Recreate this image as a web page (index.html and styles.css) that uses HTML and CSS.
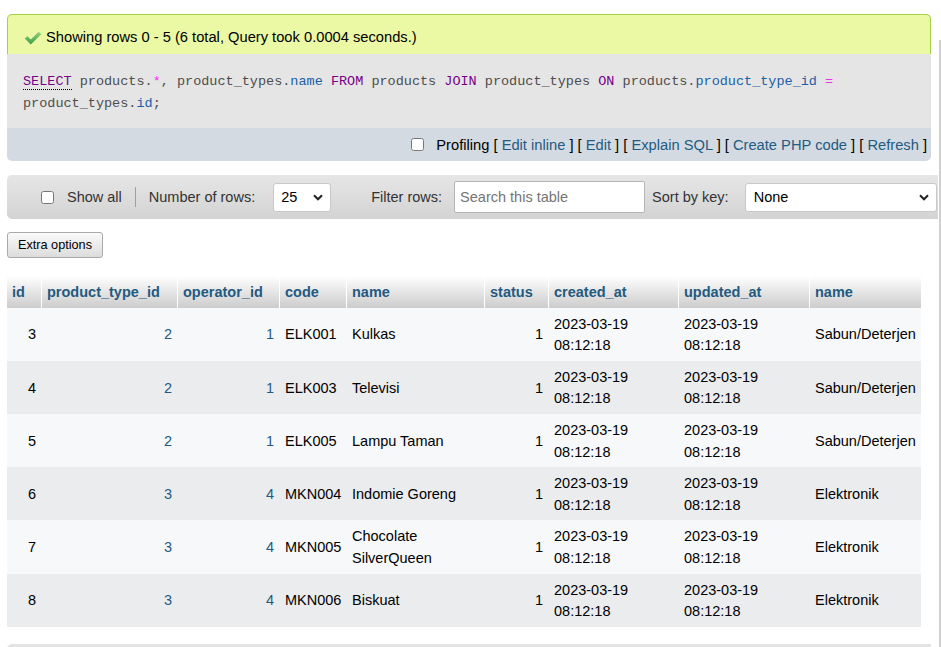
FILE: index.html
```html
<!DOCTYPE html>
<html>
<head>
<meta charset="utf-8">
<title>phpMyAdmin result</title>
<link rel="stylesheet" href="styles.css">
</head>
<body>
<div class="page">
  <div class="result">
    <div class="success">
      <svg class="check" width="18" height="14" viewBox="0 0 18 14">
        <defs>
          <linearGradient id="cg" x1="0" y1="0" x2="0" y2="1">
            <stop offset="0" stop-color="#8fd47f"/>
            <stop offset="1" stop-color="#3f9a45"/>
          </linearGradient>
        </defs>
        <path d="M0.8 7.6 L3.4 5.2 L6.8 8.4 L14.6 0.8 L17.2 3.3 L6.8 13.4 Z" fill="url(#cg)"/>
      </svg>
      <span>Showing rows 0 - 5 (6 total, Query took 0.0004 seconds.)</span>
    </div>
    <div class="sql">
      <div class="code"><span class="kw doc">SELECT</span> products.<span class="op">*</span>, product_types.<span class="fld">name</span> <span class="kw">FROM</span> products <span class="kw">JOIN</span> product_types <span class="kw">ON</span> products.<span class="fld">product_type_id</span> <span class="op">=</span><br>product_types.<span class="fld">id</span>;</div>
    </div>
    <div class="tools">
      <input type="checkbox" class="cb">
      <span class="links">Profiling [ <a>Edit inline</a> ] [ <a>Edit</a> ] [ <a>Explain SQL</a> ] [ <a>Create PHP code</a> ] [ <a>Refresh</a> ]</span>
    </div>
  </div>

  <div class="navbar">
    <input type="checkbox" class="cb nav-cb">
    <span class="lbl">Show all</span>
    <span class="sep"></span>
    <span class="lbl">Number of rows:</span>
    <div class="selectbox rows-select"><span>25</span><svg width="10" height="7" viewBox="0 0 10 7"><path d="M1 1.3 L5 5.3 L9 1.3" fill="none" stroke="#222" stroke-width="2"/></svg></div>
    <span class="lbl filter-lbl">Filter rows:</span>
    <div class="searchbox">Search this table</div>
    <span class="lbl sort-lbl">Sort by key:</span>
    <div class="selectbox sort-select"><span>None</span><svg width="10" height="7" viewBox="0 0 10 7"><path d="M1 1.3 L5 5.3 L9 1.3" fill="none" stroke="#222" stroke-width="2"/></svg></div>
  </div>

  <button class="extra">Extra options</button>

  <table class="data">
    <thead>
      <tr>
        <th class="c1">id</th>
        <th class="c2">product_type_id</th>
        <th class="c3">operator_id</th>
        <th class="c4">code</th>
        <th class="c5">name</th>
        <th class="c6">status</th>
        <th class="c7">created_at</th>
        <th class="c8">updated_at</th>
        <th class="c9">name</th>
      </tr>
    </thead>
    <tbody>
      <tr class="odd">
        <td class="num">3</td><td class="num"><a>2</a></td><td class="num"><a class="op1">1</a></td><td>ELK001</td><td>Kulkas</td><td class="num">1</td><td>2023-03-19 08:12:18</td><td>2023-03-19 08:12:18</td><td class="nw">Sabun/Deterjen</td>
      </tr>
      <tr class="even">
        <td class="num">4</td><td class="num"><a>2</a></td><td class="num"><a class="op1">1</a></td><td>ELK003</td><td>Televisi</td><td class="num">1</td><td>2023-03-19 08:12:18</td><td>2023-03-19 08:12:18</td><td class="nw">Sabun/Deterjen</td>
      </tr>
      <tr class="odd">
        <td class="num">5</td><td class="num"><a>2</a></td><td class="num"><a class="op1">1</a></td><td>ELK005</td><td>Lampu Taman</td><td class="num">1</td><td>2023-03-19 08:12:18</td><td>2023-03-19 08:12:18</td><td class="nw">Sabun/Deterjen</td>
      </tr>
      <tr class="even">
        <td class="num">6</td><td class="num"><a class="pt3">3</a></td><td class="num"><a class="op4">4</a></td><td>MKN004</td><td>Indomie Goreng</td><td class="num">1</td><td>2023-03-19 08:12:18</td><td>2023-03-19 08:12:18</td><td class="nw">Elektronik</td>
      </tr>
      <tr class="odd">
        <td class="num">7</td><td class="num"><a class="pt3">3</a></td><td class="num"><a class="op4">4</a></td><td>MKN005</td><td>Chocolate SilverQueen</td><td class="num">1</td><td>2023-03-19 08:12:18</td><td>2023-03-19 08:12:18</td><td class="nw">Elektronik</td>
      </tr>
      <tr class="even">
        <td class="num">8</td><td class="num"><a class="pt3">3</a></td><td class="num"><a class="op4">4</a></td><td>MKN006</td><td>Biskuat</td><td class="num">1</td><td>2023-03-19 08:12:18</td><td>2023-03-19 08:12:18</td><td class="nw">Elektronik</td>
      </tr>
    </tbody>
  </table>

  <div class="bottombar"></div>
</div>
<div class="gutter"></div>
</body>
</html>
```

FILE: styles.css
```css
html, body {
  margin: 0;
  padding: 0;
  overflow: hidden;
  background: #fff;
}
body {
  font-family: "Liberation Sans", Arial, sans-serif;
  font-size: 14.5px;
  color: #000;
}
.page {
  padding: 14px 0 0 7px;
}
.result {
  width: 924px;
}
.success {
  display: flex;
  align-items: center;
  background: #ebf8a4;
  border: 1px solid #a2d246;
  border-bottom: none;
  border-radius: 5px 5px 0 0;
  padding: 14px 0 8px 16px;
  font-size: 14.7px;
  line-height: 17px;
}
.check {
  margin-right: 4px;
  margin-top: 1px;
}
.sql {
  background: #e5e5e5;
  padding: 17px 15px 13px 16px;
}
.code {
  font-family: "Liberation Mono", "DejaVu Sans Mono", monospace;
  font-size: 13.5px;
  line-height: 22px;
  color: #4d4d4d;
  white-space: nowrap;
}
.kw { color: #770088; }
.doc { border-bottom: 1px dotted #000; }
.op { color: #ee33ee; }
.fld { color: #1a5fa8; }
.tools {
  height: 33px;
  background: #d3dae1;
  border-radius: 0 0 5px 5px;
  display: flex;
  justify-content: flex-end;
  align-items: center;
  padding-right: 4px;
  font-size: 14.7px;
}
.cb {
  width: 13px;
  height: 13px;
  margin: 0 12px 0 0;
}
.links a, .data a {
  color: #235a81;
  text-decoration: none;
}
.navbar {
  margin-top: 14px;
  width: 931px;
  height: 44px;
  box-sizing: border-box;
  background: linear-gradient(#e6e6e6, #d3d3d3);
  border-radius: 5px 0 0 5px;
  display: flex;
  align-items: center;
  padding-left: 34px;
}
.nav-cb {
  margin: 0 13px 0 0;
}
.lbl {
  color: #333;
}
.sep {
  width: 1px;
  height: 20px;
  background: #a89d92;
  margin: 0 13px 0 13px;
}
.selectbox {
  display: flex;
  align-items: center;
  justify-content: space-between;
  box-sizing: border-box;
  height: 29px;
  background: #fff;
  border: 1px solid #c9c9c9;
  border-radius: 3px;
  padding: 0 7px 0 7px;
  color: #000;
}
.rows-select {
  width: 58px;
  margin-left: 18px;
}
.sort-select {
  width: 192px;
  margin-left: 16px;
  padding-left: 8px;
}
.filter-lbl {
  margin-left: 40px;
}
.searchbox {
  box-sizing: border-box;
  width: 191px;
  height: 32px;
  margin-left: 12px;
  background: #fff;
  border: 1px solid #b5b5b5;
  border-radius: 2px;
  padding-left: 5px;
  display: flex;
  align-items: center;
  color: #757575;
}
.sort-lbl {
  margin-left: 7px;
}
.extra {
  display: block;
  margin-top: 13px;
  height: 26px;
  width: 96px;
  padding: 0;
  font-family: "Liberation Sans", Arial, sans-serif;
  font-size: 12.7px;
  color: #000;
  background: linear-gradient(#fafafa, #dcdcdc);
  border: 1px solid #aaa;
  border-radius: 3px;
}
.data {
  margin-top: 18px;
  width: 914px;
  table-layout: fixed;
  border-collapse: separate;
  border-spacing: 0;
}
.data th, .data td {
  box-sizing: border-box;
  padding: 5px;
  line-height: 21.6px;
  border-left: 1px solid transparent;
}
.data th {
  text-align: left;
  font-weight: bold;
  color: #235a81;
  background: linear-gradient(#ffffff, #cccccc);
  border-left-color: #fff;
  padding-top: 6px;
  padding-bottom: 4px;
}
.data th.c1, .data td:first-child {
  border-left: none;
}
.c1 { width: 34px; }
.c2 { width: 136px; }
.c3 { width: 102px; }
.c4 { width: 67px; }
.c5 { width: 138px; }
.c6 { width: 64px; }
.c7 { width: 130px; }
.c8 { width: 131px; }
.c9 { width: 112px; }
.data td {
  vertical-align: middle;
  color: #000;
  padding-top: 6px;
  padding-bottom: 4px;
}
.data td.num {
  text-align: right;
}
.data td.nw {
  white-space: nowrap;
}
.data tr.odd td {
  background: #f7f8fa;
}
.data tr.even td {
  background: #ebecee;
}
.bottombar {
  margin-top: 17px;
  width: 924px;
  height: 12px;
  background: linear-gradient(#e6e6e6, #d3d3d3);
  border-radius: 5px 0 0 0;
}
.gutter {
  position: fixed;
  left: 939px;
  top: 40px;
  bottom: 0;
  width: 2px;
  background: #d0d0d0;
}
```
